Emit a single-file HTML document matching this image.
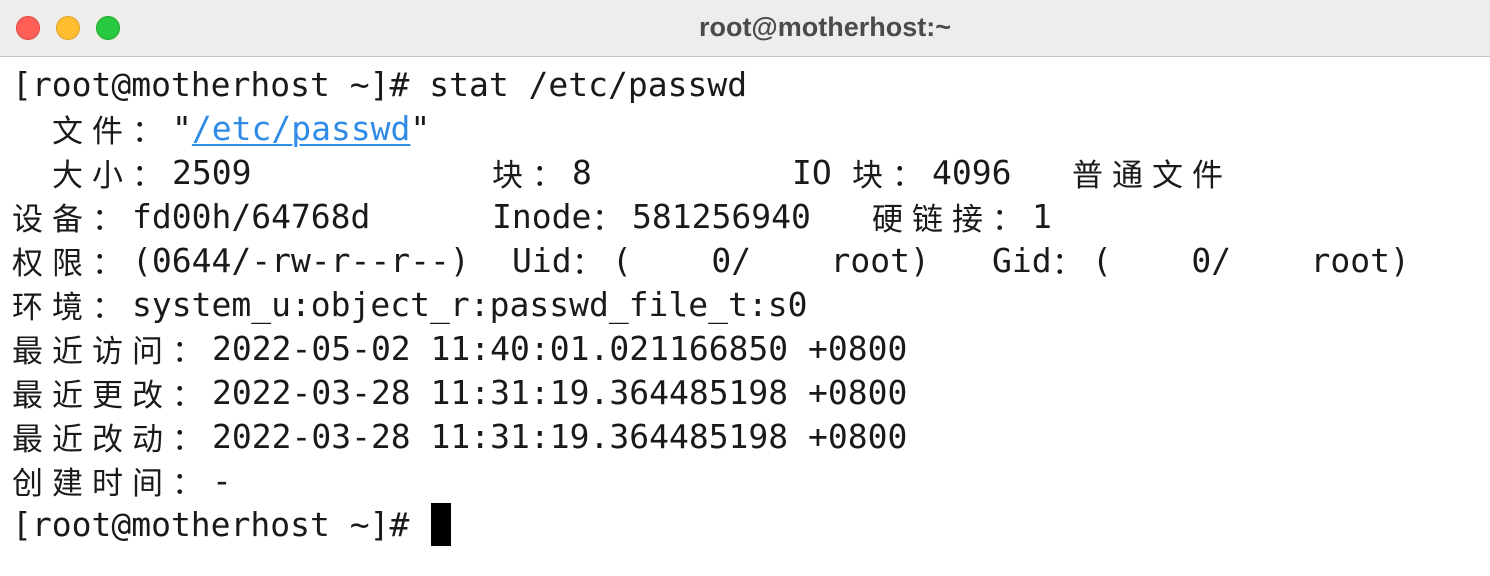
<!DOCTYPE html><html><head><meta charset="utf-8"><style>
body{margin:0;width:1490px;height:576px;background:#fff;overflow:hidden;position:relative;font-family:"DejaVu Sans Mono","Liberation Mono","Noto Sans CJK SC",monospace;color:#1a1a1a}
.bar{position:absolute;left:0;top:0;width:1490px;height:56px;background:#efedec;border-bottom:1px solid #c8c6c5}
.l{position:absolute;width:22px;height:22px;border-radius:50%;top:16px}
.ttl{position:absolute;left:0;width:1650px;top:12px;text-align:center;font:bold 27px "Liberation Sans",sans-serif;color:#4b4b4b}
.r{position:absolute;left:12px;height:44px;width:1480px}
.r span{position:absolute;top:0;line-height:44px;font-size:33px;white-space:pre}
.r .c{width:40px;text-align:left;font-family:"Noto Sans CJK SC",sans-serif;font-size:31px}
a{color:#2f8be6;text-decoration:underline;text-decoration-thickness:2px;text-underline-offset:4px}
</style></head><body>
<div class="bar"><div class="l" style="left:16px;background:#fe5f57;border:1px solid #e0443e"></div><div class="l" style="left:56px;background:#febc2e;border:1px solid #dea123"></div><div class="l" style="left:96px;background:#28c840;border:1px solid #1aab29"></div><div class="ttl">root@motherhost:~</div></div>

<div class="r" style="top:63px"><span style="left:0">[root@motherhost ~]# stat /etc/passwd</span></div>
<div class="r" style="top:107px"><span class="c" style="left:40px">文</span><span class="c" style="left:80px">件</span><span class="c" style="left:120px">：</span><span style="left:160px">"<a>/etc/passwd</a>"</span></div>
<div class="r" style="top:151px"><span class="c" style="left:40px">大</span><span class="c" style="left:80px">小</span><span class="c" style="left:120px">：</span><span style="left:160px">2509</span><span class="c" style="left:480px">块</span><span class="c" style="left:520px">：</span><span style="left:560px">8</span><span style="left:780px">IO</span><span class="c" style="left:840px">块</span><span class="c" style="left:880px">：</span><span style="left:920px">4096</span><span class="c" style="left:1060px">普</span><span class="c" style="left:1100px">通</span><span class="c" style="left:1140px">文</span><span class="c" style="left:1180px">件</span></div>
<div class="r" style="top:195px"><span class="c" style="left:0">设</span><span class="c" style="left:40px">备</span><span class="c" style="left:80px">：</span><span style="left:120px">fd00h/64768d</span><span style="left:480px">Inode</span><span class="c" style="left:580px">：</span><span style="left:620px">581256940</span><span class="c" style="left:860px">硬</span><span class="c" style="left:900px">链</span><span class="c" style="left:940px">接</span><span class="c" style="left:980px">：</span><span style="left:1020px">1</span></div>
<div class="r" style="top:239px"><span class="c" style="left:0">权</span><span class="c" style="left:40px">限</span><span class="c" style="left:80px">：</span><span style="left:120px">(0644/-rw-r--r--)</span><span style="left:500px">Uid</span><span class="c" style="left:560px">：</span><span style="left:600px">(    0/    root)</span><span style="left:980px">Gid</span><span class="c" style="left:1040px">：</span><span style="left:1080px">(    0/    root)</span></div>
<div class="r" style="top:283px"><span class="c" style="left:0">环</span><span class="c" style="left:40px">境</span><span class="c" style="left:80px">：</span><span style="left:120px">system_u:object_r:passwd_file_t:s0</span></div>
<div class="r" style="top:327px"><span class="c" style="left:0">最</span><span class="c" style="left:40px">近</span><span class="c" style="left:80px">访</span><span class="c" style="left:120px">问</span><span class="c" style="left:160px">：</span><span style="left:200px">2022-05-02 11:40:01.021166850 +0800</span></div>
<div class="r" style="top:371px"><span class="c" style="left:0">最</span><span class="c" style="left:40px">近</span><span class="c" style="left:80px">更</span><span class="c" style="left:120px">改</span><span class="c" style="left:160px">：</span><span style="left:200px">2022-03-28 11:31:19.364485198 +0800</span></div>
<div class="r" style="top:415px"><span class="c" style="left:0">最</span><span class="c" style="left:40px">近</span><span class="c" style="left:80px">改</span><span class="c" style="left:120px">动</span><span class="c" style="left:160px">：</span><span style="left:200px">2022-03-28 11:31:19.364485198 +0800</span></div>
<div class="r" style="top:459px"><span class="c" style="left:0">创</span><span class="c" style="left:40px">建</span><span class="c" style="left:80px">时</span><span class="c" style="left:120px">间</span><span class="c" style="left:160px">：</span><span style="left:200px">-</span></div>
<div class="r" style="top:503px"><span style="left:0">[root@motherhost ~]#</span></div>
<div style="position:absolute;left:431px;top:503px;width:20px;height:43px;background:#000"></div>
</body></html>
